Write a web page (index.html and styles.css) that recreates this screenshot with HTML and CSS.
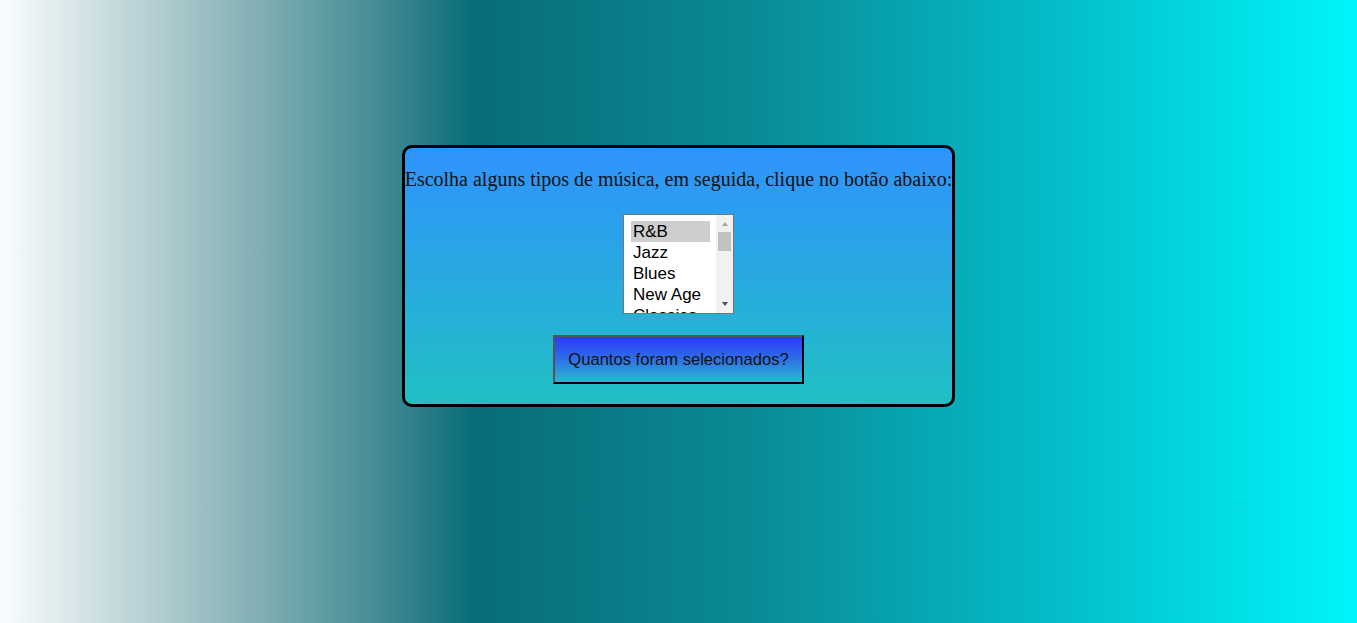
FILE: index.html
```html
<!DOCTYPE html>
<html lang="pt">
<head>
<meta charset="utf-8">
<title>Música</title>
<link rel="stylesheet" href="styles.css">
</head>
<body>
<div class="page">
  <form class="card">
    <p class="prompt">Escolha alguns tipos de música, em seguida, clique no botão abaixo:</p>
    <div class="listbox" role="listbox" aria-multiselectable="true">
      <ul class="options">
        <li class="option selected" role="option" aria-selected="true">R&amp;B</li>
        <li class="option" role="option">Jazz</li>
        <li class="option" role="option">Blues</li>
        <li class="option" role="option">New Age</li>
        <li class="option" role="option">Classico</li>
      </ul>
      <div class="scrollbar" aria-hidden="true">
        <span class="sb-btn"><span class="arrow-up"></span></span>
        <span class="sb-track"><span class="sb-thumb"></span></span>
        <span class="sb-btn sb-btn-down"><span class="arrow-down"></span></span>
      </div>
    </div>
    <button type="button" class="count-btn">Quantos foram selecionados?</button>
  </form>
</div>
</body>
</html>
```
FILE: styles.css
```css
html, body {
  margin: 0;
  padding: 0;
  height: 100%;
}
body {
  background: linear-gradient(to right, #fafdfe 0%, #9cbfc3 15%, #4b8f97 27%, #086c79 35%, #0a8a93 55%, #05b6c4 75%, #00f5fa 100%);
  font-family: "Liberation Serif", "Times New Roman", serif;
}
.page {
  height: 623px;
  display: flex;
  justify-content: center;
  align-items: flex-start;
  padding-top: 145px;
  box-sizing: border-box;
}
.card {
  border: 3px solid #000;
  border-radius: 10px;
  background: linear-gradient(to bottom, #2f93fd 0%, #21c0c4 100%);
  display: flex;
  flex-direction: column;
  align-items: center;
  padding: 0 0 20px;
  width: max-content;
}
.prompt {
  margin: 20px 0 0;
  font-size: 20px;
  line-height: 22px;
  color: #111;
  white-space: nowrap;
}
.listbox {
  margin-top: 24px;
  width: 111px;
  height: 100px;
  box-sizing: border-box;
  border: 1px solid #767676;
  background: #fff;
  display: flex;
  font-family: "Liberation Sans", Arial, sans-serif;
  font-size: 17px;
  color: #000;
}
.options {
  flex: 1;
  list-style: none;
  margin: 0;
  padding: 6px 6px 0 7px;
  overflow: hidden;
}
.option {
  padding: 0 2px;
  line-height: 21px;
  height: 21px;
  white-space: nowrap;
}
.option.selected {
  background: #cecece;
}
.scrollbar {
  width: 17px;
  background: #f1f1f1;
  display: flex;
  flex-direction: column;
}
.sb-btn {
  height: 17px;
  display: flex;
  justify-content: center;
  align-items: flex-start;
  padding-top: 7px;
  box-sizing: border-box;
}
.sb-btn-down {
  padding-top: 6px;
}
.arrow-up {
  width: 0;
  height: 0;
  border-left: 3.5px solid transparent;
  border-right: 3.5px solid transparent;
  border-bottom: 4px solid #a3a3a3;
}
.arrow-down {
  width: 0;
  height: 0;
  border-left: 3.5px solid transparent;
  border-right: 3.5px solid transparent;
  border-top: 4px solid #505050;
}
.sb-track {
  flex: 1;
  display: flex;
  flex-direction: column;
  padding: 0 2px;
}
.sb-thumb {
  height: 19px;
  background: #c1c1c1;
}
.count-btn {
  margin-top: 21px;
  font-family: "Liberation Sans", Arial, sans-serif;
  font-size: 16.6px;
  line-height: 19px;
  color: #111;
  padding: 13px 13px;
  border-width: 2px;
  border-style: solid;
  border-color: #555 #000 #000 #555;
  background: linear-gradient(to bottom, #2b3af7 0%, #2e6ae8 45%, #2ab8cf 100%);
  cursor: pointer;
}
```
